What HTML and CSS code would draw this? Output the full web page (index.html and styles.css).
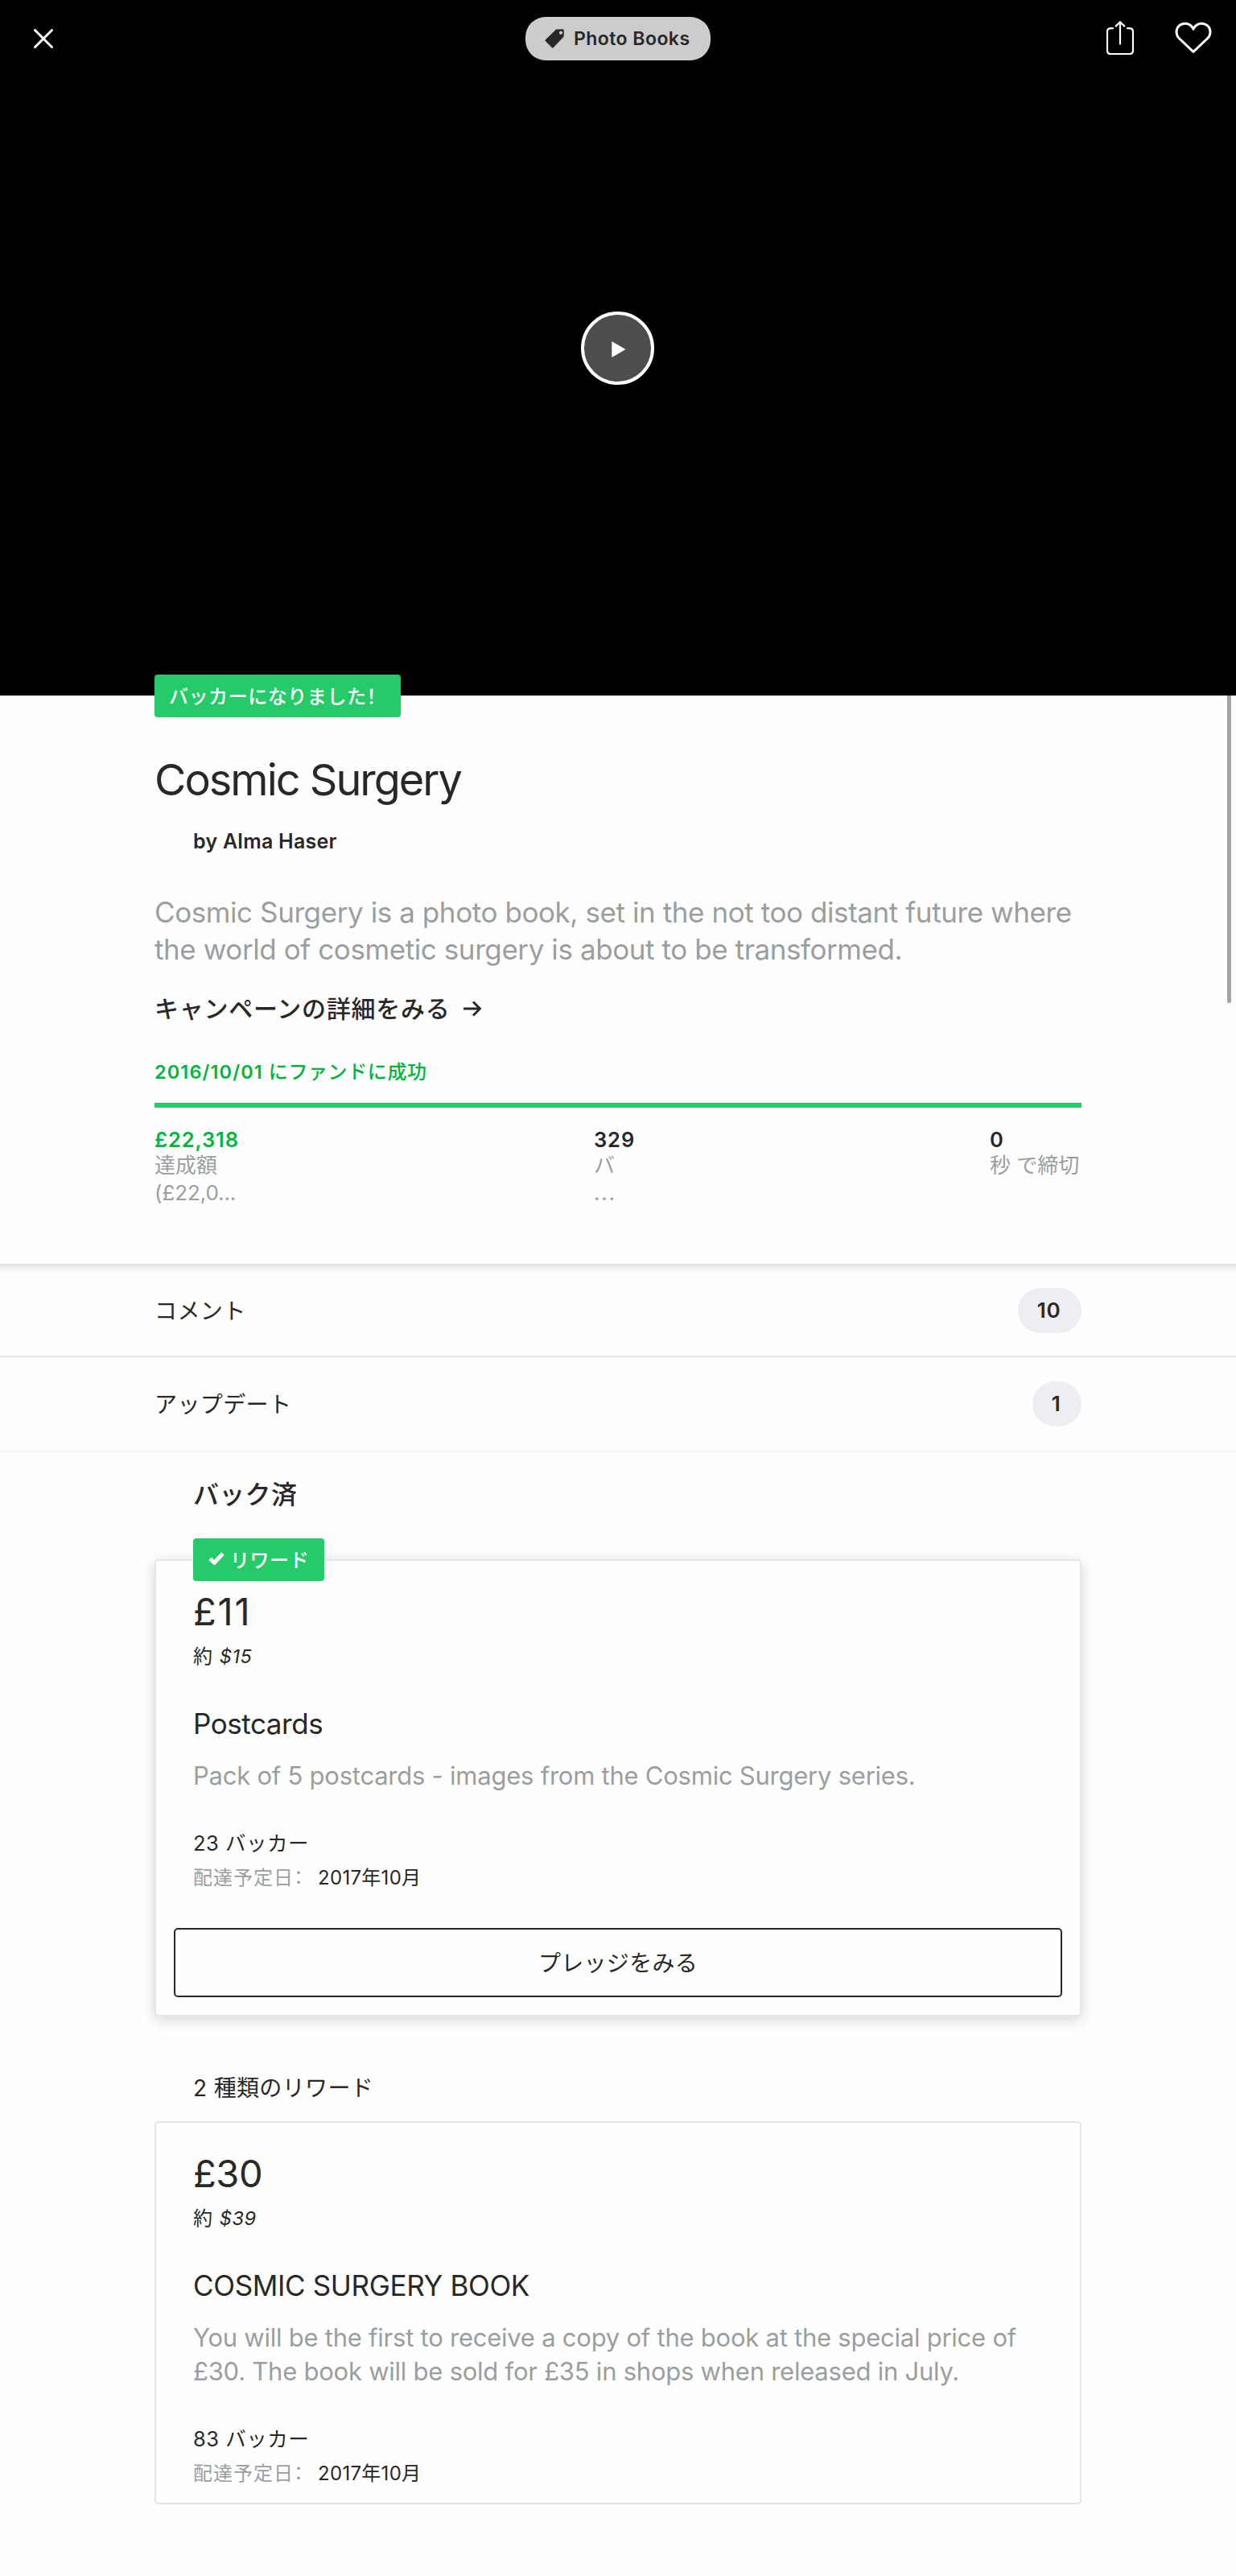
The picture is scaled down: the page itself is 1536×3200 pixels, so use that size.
FILE: index.html
```html
<!DOCTYPE html>
<html lang="ja">
<head>
<meta charset="utf-8">
<title>Cosmic Surgery</title>
<link rel="stylesheet" href="styles.css">
</head>
<body>
<header class="hero">
  <nav class="topbar">
    <svg class="icon-close" viewBox="0 0 24 24"><path d="M1.5 1.5 22.5 22.5M22.5 1.5 1.5 22.5"/></svg>
    <div class="category">
      <svg class="icon-tag" viewBox="0 0 24 24"><path fill-rule="evenodd" d="M14 .5 22 .3Q23.8.3 23.8 2L23.6 9.6 10.6 23.2Q9.800 24 9 23.2L.8 15Q0 14.2.8 13.4ZM20 2.6a2.1 2.1 0 1 0 .01 0Z"/></svg>
      <span>Photo Books</span>
    </div>
    <div class="actions">
      <svg class="icon-share" viewBox="0 0 34 42"><path d="M8 9.200H5.500Q1 9.200 1 13.700V36.500Q1 41 5.500 41H28.500Q33 41 33 36.500V13.700Q33 9.200 28.500 9.200H26M17 28.500V1.500M11.800 6.400 17 1.300 22.200 6.400"/></svg>
      <svg class="icon-heart" viewBox="0 0 46 40"><path d="M23 37.300 5.200 20.500C1.300 16.600.7 9.500 5 5.200 9.800.4 19.200 1 23 9.200 26.800 1 36.200.4 41 5.200 45.300 9.500 44.700 16.600 40.800 20.500Z"/></svg>
    </div>
  </nav>
  <div class="play"><svg class="icon-play" viewBox="0 0 18 20"><path d="M.3 0 17.500 10 .3 20Z"/></svg></div>
</header>

<section class="info">
  <div class="badge badge-backed">バッカーになりました！</div>
  <h1 class="project-name">Cosmic Surgery</h1>
  <div class="author">by Alma Haser</div>
  <p class="blurb">Cosmic Surgery is a photo book, set in the not too distant future where<br>the world of cosmetic surgery is about to be transformed.</p>
  <div class="more"><span>キャンペーンの詳細をみる</span><svg class="icon-arrow" viewBox="0 0 22 20"><path d="M0 10H20M12 1.500 20.500 10 12 18.500"/></svg></div>
  <div class="funded"><span class="funded-date">2016/10/01</span> にファンドに成功</div>
  <div class="progress"></div>
  <div class="stats">
    <div class="stat"><div class="stat-value pledged">£22,318</div><div class="stat-label">達成額<br><span class="goal">(£22,0...</span></div></div>
    <div class="stat"><div class="stat-value">329</div><div class="stat-label">バ<br><span class="dots">...</span></div></div>
    <div class="stat"><div class="stat-value">0</div><div class="stat-label">秒 で締切</div></div>
  </div>
</section>

<section class="menu">
  <div class="menu-row"><span class="menu-label">コメント</span><span class="count">10</span></div>
  <div class="menu-row menu-row-last"><span class="menu-label">アップデート</span><span class="count">1</span></div>
</section>

<section class="rewards">
  <h2 class="rewards-heading">バック済</h2>
  <article class="card card-backed">
    <div class="badge badge-reward"><svg class="icon-check" viewBox="0 0 20 16"><path d="M2 8.200 7.300 13.200 18 2"/></svg><span>リワード</span></div>
    <div class="card-body">
      <div class="price price-narrow-digits">£11</div>
      <div class="approx">約 <em class="usd">$15</em></div>
      <h3 class="reward-title">Postcards</h3>
      <p class="reward-text">Pack of 5 postcards - images from the Cosmic Surgery series.</p>
      <div class="backers">23 バッカー</div>
      <div class="delivery"><span class="delivery-label">配達予定日：</span><span class="delivery-date">2017年10月</span></div>
    </div>
    <button class="pledge-button">プレッジをみる</button>
  </article>

  <div class="reward-count">2 種類のリワード</div>
  <article class="card">
    <div class="card-body">
      <div class="price">£30</div>
      <div class="approx">約 <em class="usd">$39</em></div>
      <h3 class="reward-title reward-title-caps">COSMIC SURGERY BOOK</h3>
      <p class="reward-text">You will be the first to receive a copy of the book at the special price of<br>£30. The book will be sold for £35 in shops when released in July.</p>
      <div class="backers">83 バッカー</div>
      <div class="delivery"><span class="delivery-label">配達予定日：</span><span class="delivery-date">2017年10月</span></div>
    </div>
  </article>
</section>
<div class="scrollbar"></div>
</body>
</html>
```
FILE: styles.css
```css
* { box-sizing: border-box; }
body {
  position: relative;
  margin: 0;
  width: 1536px;
  height: 3200px;
  background: #fefefe;
  color: #282828;
  font-family: Inter, "Noto Sans CJK JP", sans-serif;
  font-weight: 400;
  font-feature-settings: "calt" 0;
}
h1, h2, h3, p { margin: 0; font-weight: 400; }
svg { display: block; fill: none; }

.hero {
  height: 864px;
  background: #000;
  display: flex;
  flex-direction: column;
  align-items: center;
}
.topbar {
  width: 100%;
  height: 96px;
  padding: 0 30px 0 42px;
  display: grid;
  grid-template-columns: 611px 230px 1fr;
  align-items: center;
}
.icon-close { width: 24px; height: 24px; stroke: #fff; stroke-width: 3; stroke-linecap: round; }
.category {
  height: 54px;
  padding-left: 24px;
  display: flex;
  align-items: center;
  gap: 12px;
  border-radius: 25px;
  background: #ccc;
  font-size: 23px;
  font-weight: 600;
  letter-spacing: 0.45px;
  white-space: nowrap;
}
.icon-tag { width: 24px; height: 24px; fill: #282828; }
.actions { display: flex; justify-content: flex-end; gap: 51px; align-items: center; margin-bottom: 2px; }
.icon-share { width: 34px; height: 42px; stroke: #fff; stroke-width: 2.2; stroke-linecap: round; }
.icon-heart { width: 46px; height: 40px; stroke: #fff; stroke-width: 3; stroke-linejoin: round; }
.play {
  width: 91px;
  height: 91px;
  margin: 291px 1px 0 0;
  border: 4px solid #fff;
  border-radius: 50%;
  background: #4d4d4d;
  display: flex;
  align-items: center;
  justify-content: center;
}
.icon-play { width: 18px; height: 20px; margin: 2px 0 0 2px; fill: #fff; }

.badge {
  position: absolute;
  height: 53px;
  padding-bottom: 3px;
  display: flex;
  align-items: center;
  border-radius: 4px;
  background: #25cb68;
  color: #fff;
  font-size: 24px;
  font-weight: 500;
  letter-spacing: 0.55px;
  white-space: nowrap;
  font-feature-settings: "halt" 1;
}

.info { position: relative; height: 706px; padding: 72px 192px 0; }
.badge-backed { left: 192px; top: -26px; width: 306px; padding-left: 18px; }
.project-name { font-size: 54px; line-height: 66px; letter-spacing: -2px; }
.author { margin: 27px 0 0 48px; font-size: 25px; line-height: 32px; font-weight: 600; letter-spacing: 0.25px; }
.blurb { margin-top: 49px; font-size: 35px; line-height: 46px; letter-spacing: -0.415px; color: #9b9e9e; white-space: nowrap; }
.more {
  margin-top: 33px;
  display: flex;
  align-items: center;
  gap: 16px;
  font-size: 30px;
  line-height: 36px;
  font-weight: 500;
  letter-spacing: 0.75px;
}
.icon-arrow { width: 22px; height: 20px; stroke: #282828; stroke-width: 3; }
.funded { margin-top: 46px; font-size: 24px; line-height: 30px; font-weight: 500; letter-spacing: 0.6px; color: #05b440; }
.funded-date { font-size: 23.5px; font-weight: 600; letter-spacing: 1.1px; }
.progress { margin-top: 23px; height: 6px; background: #25cb68; }
.stats { margin-top: 24px; display: grid; grid-template-columns: 546px 492px 1fr; white-space: nowrap; }
.stat-value { font-size: 25.5px; line-height: 31px; font-weight: 600; letter-spacing: 0.9px; }
.pledged { color: #05b440; }
.stat-label { font-size: 26px; line-height: 34px; color: #9b9e9e; }
.goal { letter-spacing: -0.1px; }
.dots { letter-spacing: 1.7px; }

.menu { border-top: 2px solid #e3e3e3; border-bottom: 2px solid #f6f6f6; background: linear-gradient(#e6e6e6, #f5f5f5 5px, #fefefe 10px) no-repeat; }
.menu-row {
  height: 114px;
  padding: 0 192px;
  display: flex;
  align-items: center;
  justify-content: space-between;
  border-bottom: 2px solid #e6e6e6;
}
.menu-row-last { height: 116px; border-bottom: 0; }
.menu-label { padding-bottom: 2px; font-size: 28px; letter-spacing: 0.4px; }
.count {
  height: 56px;
  padding: 0 25.5px 0 24px;
  border-radius: 28px;
  background: #eeedf2;
  font-size: 26px;
  line-height: 56px;
  font-weight: 600;
  letter-spacing: 0.8px;
}

.rewards { padding: 33px 192px 0; }
.rewards-heading { margin-left: 48px; font-size: 32px; line-height: 40px; font-weight: 500; letter-spacing: 0.3px; }
.card { position: relative; border: 2px solid #e6e6e6; border-radius: 5px; background: #fefefe; padding-bottom: 21px; }
.card-backed { margin-top: 60px; padding-bottom: 22px; box-shadow: 0 4px 18px rgba(0, 0, 0, 0.17); }
.badge-reward { left: 46px; top: -28px; width: 163px; padding-left: 19px; gap: 7px; }
.icon-check { width: 20px; height: 16px; stroke: #fff; stroke-width: 5; }
.card-body { padding: 35px 46px 0; white-space: nowrap; }
.price { font-size: 47px; line-height: 56px; letter-spacing: -0.4px; }
.price-narrow-digits { letter-spacing: 1.8px; }
.approx { margin-top: 13px; font-size: 24px; line-height: 30px; }
.usd { margin-left: 2px; font-size: 23.5px; font-style: italic; letter-spacing: 0.6px; }
.reward-title { margin-top: 46px; font-size: 35px; line-height: 44px; letter-spacing: -0.45px; }
.reward-title-caps { letter-spacing: -0.35px; }
.reward-text { margin-top: 22px; font-size: 31px; line-height: 42px; letter-spacing: -0.24px; color: #9b9e9e; }
.backers { margin-top: 47px; font-size: 25.5px; line-height: 32px; letter-spacing: 0.5px; }
.delivery { margin-top: 12px; font-size: 24px; line-height: 30px; display: flex; }
.delivery-label { width: 155px; letter-spacing: 1px; color: #9b9e9e; font-feature-settings: "halt" 1; }
.delivery-date { letter-spacing: 0.3px; }
.pledge-button {
  display: block;
  width: 1104px;
  height: 86px;
  margin: 47px 0 0 22px;
  padding: 0 0 3px;
  border: 2px solid #282828;
  border-radius: 5px;
  background: #fefefe;
  color: #282828;
  font: inherit;
  font-size: 28px;
  letter-spacing: 0.3px;
}
.reward-count { margin: 71px 0 23px 48px; font-size: 28px; line-height: 36px; letter-spacing: 0.35px; }

.scrollbar { position: absolute; left: 1525px; top: 864px; width: 5px; height: 382px; border-radius: 0 0 3px 3px; background: #a3a3a3; }
```
